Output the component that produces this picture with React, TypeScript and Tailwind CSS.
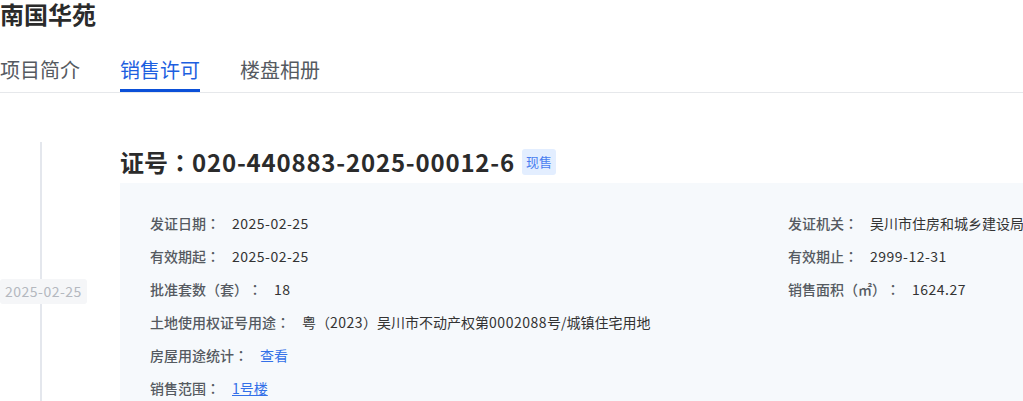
import React from "react";

const font = { fontFamily: '"Noto Sans CJK SC", "Noto Sans", sans-serif' };
const tcFont = { fontFamily: '"Noto Sans CJK TC", "Noto Sans CJK SC", sans-serif' };

function Colon() {
  return <span style={tcFont}>：</span>;
}

function Row({ label, children }: { label: string; children: React.ReactNode }) {
  return (
    <div className="flex items-center h-[22px] leading-[22px] text-[14px] whitespace-nowrap">
      <span className="text-[#555a61] font-medium mr-[12px]">
        {label}
        <Colon />
      </span>
      <span className="text-[#333333]">{children}</span>
    </div>
  );
}

function Num({ children }: { children: React.ReactNode }) {
  return <span className="tracking-[0.5px]">{children}</span>;
}

export default function App() {
  return (
    <div
      className="w-[1023px] h-[401px] overflow-hidden bg-white [text-spacing-trim:space-all]"
      style={font}
    >
      <div className="h-[30px] leading-[30px] text-[24px] font-bold text-[#2b2b2b] -mt-[1px]">南国华苑</div>
      <div className="mt-[19px] flex gap-[40px] border-b border-[#e6e8eb]">
        <div className="relative h-[44px] leading-[44px] text-[20px] text-[#555a61]">项目简介</div>
        <div className="relative h-[44px] leading-[44px] text-[20px] text-[#1d5fe0]">
          销售许可
          <div className="absolute left-0 right-0 bottom-0 h-[3px] bg-[#0b50d8]" />
        </div>
        <div className="relative h-[44px] leading-[44px] text-[20px] text-[#555a61]">楼盘相册</div>
      </div>

      <div className="mt-[49px] flex">
        <div className="relative w-[120px] shrink-0 flex items-center">
          <div className="absolute left-[40px] top-0 bottom-0 w-[2px] bg-[#e4e7ed]" />
          <div className="relative h-[25px] leading-[25px] px-[5px] rounded-[3px] bg-[#f5f6f8] text-[14px] text-[#b4b8bf] tracking-[0.5px]">
            2025-02-25
          </div>
        </div>
        <div className="flex-1 min-w-0">
          <div className="flex items-center gap-[7px] h-[39px] mb-[2px]">
            <span className="text-[24px] font-bold text-[#2b2b2b] leading-[30px] whitespace-nowrap">
              证号
              <span style={tcFont}>：</span>
              <span className="tracking-[0.8px]">020-440883-2025-00012-6</span>
            </span>
            <span className="h-[26px] leading-[26px] px-[4px] rounded-[3px] bg-[#e3eeff] text-[13px] text-[#4a7ef0]">
              现售
            </span>
          </div>
          <div className="bg-[#f6f9fc] pl-[30px] pt-[29px] pb-[41px] w-[960px]">
            <div className="grid grid-cols-[638px_1fr] gap-y-[11px]">
              <Row label="发证日期"><Num>2025-02-25</Num></Row>
              <Row label="发证机关">吴川市住房和城乡建设局</Row>
              <Row label="有效期起"><Num>2025-02-25</Num></Row>
              <Row label="有效期止"><Num>2999-12-31</Num></Row>
              <Row label="批准套数（套）"><Num>18</Num></Row>
              <Row label="销售面积（㎡）"><Num>1624.27</Num></Row>
              <div className="col-span-2">
                <Row label="土地使用权证号用途">
                  粤（<Num>2023</Num>）吴川市不动产权第<Num>0002088</Num>号/城镇住宅用地
                </Row>
              </div>
              <div className="col-span-2">
                <Row label="房屋用途统计">
                  <span className="text-[#3370e8]">查看</span>
                </Row>
              </div>
              <div className="col-span-2">
                <Row label="销售范围">
                  <span className="text-[#3370e8] underline">1号楼</span>
                </Row>
              </div>
            </div>
          </div>
        </div>
      </div>
    </div>
  );
}
